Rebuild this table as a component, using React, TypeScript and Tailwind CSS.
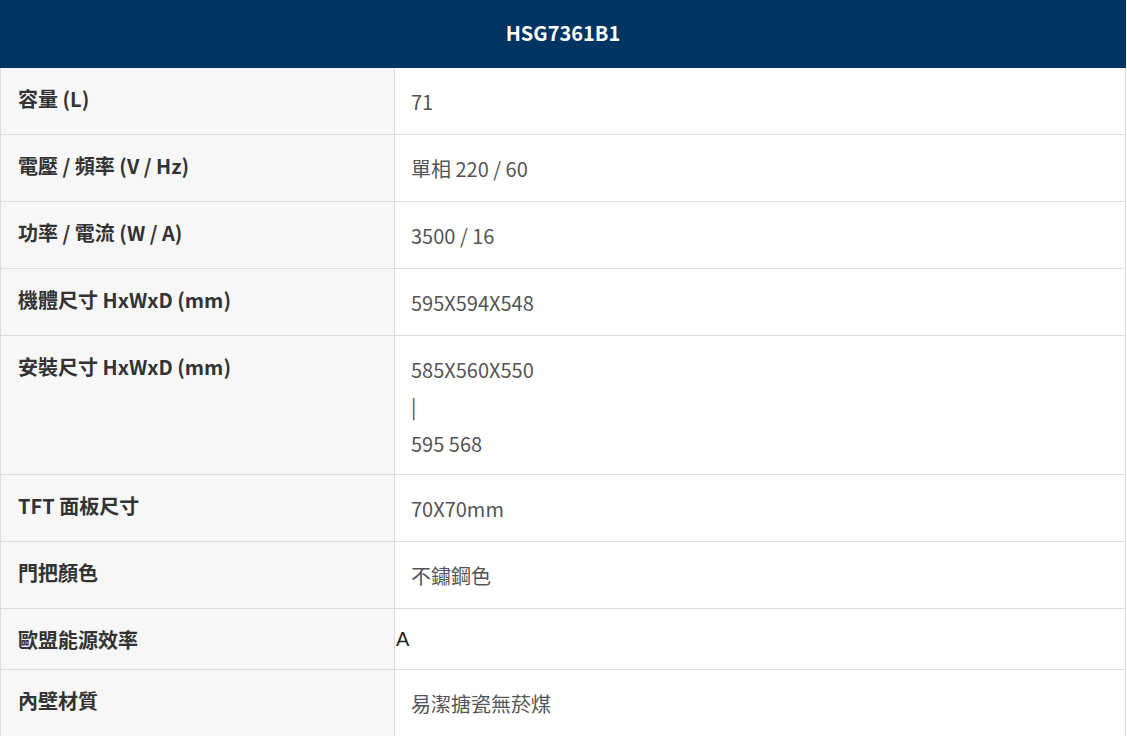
import type { ReactElement, ReactNode } from "react";

type SpecRow = {
  label: string;
  value: ReactNode;
  plain?: boolean;
};

const ROWS: SpecRow[] = [
  { label: "容量 (L)", value: "71" },
  { label: "電壓 / 頻率 (V / Hz)", value: "單相 220 / 60" },
  { label: "功率 / 電流 (W / A)", value: "3500 / 16" },
  { label: "機體尺寸 HxWxD (mm)", value: "595X594X548" },
  {
    label: "安裝尺寸 HxWxD (mm)",
    value: (
      <>
        <div>585X560X550</div>
        <div>|</div>
        <div>595 568</div>
      </>
    ),
  },
  { label: "TFT 面板尺寸", value: "70X70mm" },
  { label: "門把顏色", value: "不鏽鋼色" },
  { label: "歐盟能源效率", value: "A", plain: true },
  { label: "內壁材質", value: "易潔搪瓷無菸煤" },
];

const CJK = "font-['Noto_Sans_CJK_TC','Noto_Sans',sans-serif]";

export default function App(): ReactElement {
  return (
    <div className={`w-[1127px] bg-white ${CJK}`}>
      <div className="flex h-[68px] w-[1126px] items-center justify-center bg-[#003462] pb-[2px] text-[20px] font-bold text-white">
        HSG7361B1
      </div>
      <div className="w-[1126px] border-x border-[#dddddd]">
        {ROWS.map((row) => (
          <div key={row.label} className="flex border-b border-[#dddddd]">
            <div className="w-[394px] shrink-0 border-r border-[#dddddd] bg-[#f7f7f7] pb-[13px] pl-[17px] pt-[15px] text-[20px] font-bold leading-[32px] text-[#333333]">
              {row.label}
            </div>
            {row.plain ? (
              <div className="flex flex-1 items-center pl-[1px] font-['Liberation_Sans',sans-serif] text-[20px] text-[#222222]">
                {row.value}
              </div>
            ) : (
              <div className="min-h-[66px] flex-1 pb-[12px] pl-[16px] pt-[15px] text-[20px] leading-[37px] text-[#555555]">
                {row.value}
              </div>
            )}
          </div>
        ))}
      </div>
    </div>
  );
}
